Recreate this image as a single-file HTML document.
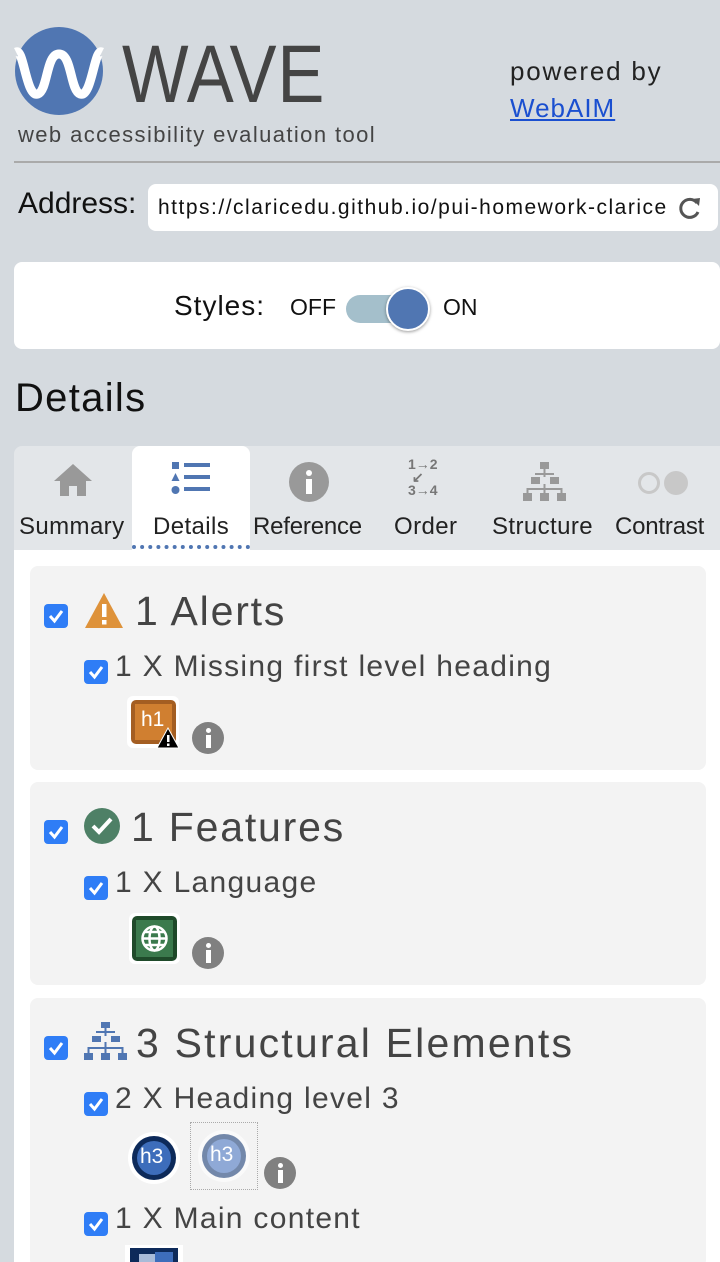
<!DOCTYPE html>
<html style="width:720px;height:1262px;overflow:hidden"><head><meta charset="utf-8"><style>
*{margin:0;padding:0;box-sizing:border-box}
body{width:720px;height:1262px;overflow:hidden;background:#d5dadf;font-family:"Liberation Sans",sans-serif;color:#444;position:relative}
.a{position:absolute;white-space:nowrap}
.cb{position:absolute;background:#2f7df6;border-radius:4px}
.cb svg{position:absolute;left:0;top:0}
.card{position:absolute;left:30px;width:676px;background:#f3f3f3;border-radius:8px}
.info{position:absolute;width:32px;height:32px;border-radius:50%;background:#808080}
.info:before{content:"";position:absolute;left:14px;top:6px;width:5px;height:5px;background:#fff;border-radius:50%}
.info:after{content:"";position:absolute;left:14px;top:13px;width:5px;height:13px;background:#fff}
.tab{position:absolute;top:527px;font-size:24px;color:#222;transform:translateY(-50%);letter-spacing:0.4px}
.h{font-size:41px;color:#444;letter-spacing:1.8px}
.s{font-size:30px;color:#444;letter-spacing:1.3px}
</style></head><body>
<svg class="a" style="left:14px;top:26px" width="90" height="90" viewBox="0 0 90 90">
<circle cx="45" cy="45" r="44" fill="#5076b2"/>
<path d="M2 26 C10 22 12 72 24 68 C34 64 32 28 45 28 C58 28 56 64 66 68 C78 72 80 22 88 26" fill="none" stroke="#fff" stroke-width="9"/>
</svg>
<div class="a" style="left:122px;top:28px;font-size:82px;color:#444;letter-spacing:1px;transform:scaleX(0.86);transform-origin:left">WAVE</div>
<div class="a" style="left:18px;top:122px;font-size:22px;color:#444;letter-spacing:1.4px">web accessibility evaluation tool</div>
<div class="a" style="left:510px;top:56px;font-size:26px;color:#222;letter-spacing:1.8px">powered by</div>
<div class="a" style="left:510px;top:93px;font-size:26px;color:#1a4fd0;text-decoration:underline;letter-spacing:1px">WebAIM</div>
<div class="a" style="left:14px;top:161px;width:706px;height:2px;background:#aaa"></div>
<div class="a" style="left:18px;top:187px;font-size:30px;color:#111">Address:</div>
<div class="a" style="left:148px;top:184px;width:570px;height:47px;background:#fff;border-radius:8px"></div>
<div class="a" style="left:158px;top:196px;font-size:21px;color:#111;letter-spacing:1.5px">https://claricedu.github.io/pui-homework-clarice</div>
<svg class="a" style="left:677px;top:195px" width="26" height="26" viewBox="0 0 26 26"><path d="M20 8 A9 9 0 1 0 21 17" fill="none" stroke="#555" stroke-width="3"/><path d="M15 4 L23 3 L22 11 Z" fill="#555"/></svg>
<div class="a" style="left:14px;top:262px;width:706px;height:87px;background:#fff;border-radius:8px"></div>
<div class="a" style="left:174px;top:290px;font-size:28px;color:#111;letter-spacing:1px">Styles:</div>
<div class="a" style="left:290px;top:294px;font-size:23px;color:#111">OFF</div>
<div class="a" style="left:346px;top:295px;width:70px;height:28px;background:#a4bfcb;border-radius:14px"></div>
<div class="a" style="left:386px;top:287px;width:44px;height:44px;background:#5076b2;border-radius:50%;border:2px solid #fff;box-shadow:0 1px 3px rgba(0,0,0,.4)"></div>
<div class="a" style="left:443px;top:294px;font-size:23px;color:#111">ON</div>
<div class="a" style="left:15px;top:376px;font-size:40px;color:#111;letter-spacing:1.3px">Details</div>
<div class="a" style="left:14px;top:446px;width:706px;height:104px;background:#e3e6e9;border-radius:8px 0 0 0"></div>
<div class="a" style="left:132px;top:446px;width:118px;height:104px;background:#fff;border-radius:8px 8px 0 0"></div>
<div class="a" style="left:132px;top:545px;width:118px;height:0;border-top:4px dotted #5076b2"></div>
<div class="a" style="left:14px;top:550px;width:706px;height:712px;background:#fff"></div>
<svg class="a" style="left:53px;top:462px" width="40" height="36" viewBox="0 0 40 36"><path d="M20 2 L39 19 L33 19 L33 34 L24 34 L24 24 L16 24 L16 34 L7 34 L7 19 L1 19 Z" fill="#999"/></svg>
<svg class="a" style="left:170px;top:460px" width="42" height="36" viewBox="0 0 42 36"><rect x="2" y="2" width="7" height="7" fill="#5076b2"/><path d="M5.5 13 L9.5 21 L1.5 21Z" fill="#5076b2"/><circle cx="5.5" cy="30" r="4" fill="#5076b2"/><rect x="14" y="3" width="26" height="4" fill="#5076b2"/><rect x="14" y="15" width="26" height="4" fill="#5076b2"/><rect x="14" y="27" width="26" height="4" fill="#5076b2"/></svg>
<div class="a" style="left:289px;top:462px;width:40px;height:40px;border-radius:50%;background:#999"></div>
<div class="a" style="left:306px;top:470px;width:6px;height:6px;background:#fff;border-radius:50%"></div>
<div class="a" style="left:306px;top:479px;width:6px;height:15px;background:#fff"></div>
<div class="a" style="left:408px;top:458px;font-size:14px;color:#777;font-weight:bold;line-height:13px">1→2<br>&nbsp;↙<br>3→4</div>
<svg class="a" style="left:523px;top:462px" width="44" height="40" viewBox="0 0 44 40"><g fill="#999"><rect x="17" y="0" width="9" height="7"/><rect x="8" y="15" width="9" height="7"/><rect x="27" y="15" width="9" height="7"/><rect x="0" y="31" width="9" height="8"/><rect x="17" y="31" width="9" height="8"/><rect x="34" y="31" width="9" height="8"/></g><path d="M21.5 7V15M12 12H31M4.5 31V27H38.5V31M21.5 22V31" stroke="#999" stroke-width="2" fill="none"/></svg>
<div class="a" style="left:638px;top:472px;width:22px;height:22px;border-radius:50%;border:3px solid #c8c8c8"></div>
<div class="a" style="left:664px;top:471px;width:24px;height:24px;border-radius:50%;background:#c8c8c8"></div>
<div class="tab" style="left:19px">Summary</div>
<div class="tab" style="left:153px">Details</div>
<div class="tab" style="left:253px;letter-spacing:-0.2px">Reference</div>
<div class="tab" style="left:394px">Order</div>
<div class="tab" style="left:492px">Structure</div>
<div class="tab" style="left:615px;letter-spacing:-0.2px">Contrast</div>
<div class="card" style="top:566px;height:204px"></div>
<div class="cb" style="left:44px;top:604px;width:24px;height:24px"><svg width="24" height="24"><path d="M6 12 L10.5 17 L18 7" stroke="#fff" stroke-width="3" fill="none"/></svg></div>
<svg class="a" style="left:84px;top:592px" width="40" height="36" viewBox="0 0 40 36"><path d="M20 1 L39 36 L1 36Z" fill="#de923a"/><rect x="18" y="12" width="4.5" height="13" fill="#fff"/><rect x="18" y="28" width="4.5" height="4.5" fill="#fff"/></svg>
<div class="a h" style="left:135px;top:588px">1 Alerts</div>
<div class="cb" style="left:84px;top:660px;width:24px;height:24px"><svg width="24" height="24"><path d="M6 12 L10.5 17 L18 7" stroke="#fff" stroke-width="3" fill="none"/></svg></div>
<div class="a s" style="left:115px;top:650px">1 X Missing first level heading</div>
<div class="a" style="left:127px;top:696px;width:52px;height:52px;background:#fff;border-radius:6px"></div>
<div class="a" style="left:131px;top:700px;width:45px;height:44px;background:#a45e22;border-radius:5px"></div>
<div class="a" style="left:135px;top:704px;width:37px;height:36px;background:#d07f30"></div>
<div class="a" style="left:141px;top:708px;font-size:21px;color:#fff">h1</div>
<svg class="a" style="left:156px;top:727px" width="24" height="22" viewBox="0 0 24 22"><path d="M12 1 L23 21 L1 21Z" fill="#000" stroke="#fff" stroke-width="1"/><rect x="11" y="8" width="2.5" height="7" fill="#fff"/><rect x="11" y="16.5" width="2.5" height="2.5" fill="#fff"/></svg>
<div class="info" style="left:192px;top:722px"></div>
<div class="card" style="top:782px;height:203px"></div>
<div class="cb" style="left:44px;top:820px;width:24px;height:24px"><svg width="24" height="24"><path d="M6 12 L10.5 17 L18 7" stroke="#fff" stroke-width="3" fill="none"/></svg></div>
<svg class="a" style="left:84px;top:808px" width="36" height="36" viewBox="0 0 36 36"><circle cx="18" cy="18" r="18" fill="#4e8066"/><path d="M9 18 L15 24 L27 11" stroke="#fff" stroke-width="4" fill="none"/></svg>
<div class="a h" style="left:131px;top:804px">1 Features</div>
<div class="cb" style="left:84px;top:876px;width:24px;height:24px"><svg width="24" height="24"><path d="M6 12 L10.5 17 L18 7" stroke="#fff" stroke-width="3" fill="none"/></svg></div>
<div class="a s" style="left:115px;top:866px">1 X Language</div>
<div class="a" style="left:129px;top:913px;width:51px;height:51px;background:#fff;border-radius:6px"></div>
<div class="a" style="left:132px;top:916px;width:45px;height:45px;background:#1f4a2a;border-radius:5px"></div>
<div class="a" style="left:136px;top:920px;width:37px;height:37px;background:#3b7a4d"></div>
<svg class="a" style="left:139px;top:923px" width="31" height="31" viewBox="0 0 31 31"><g fill="none" stroke="#fff" stroke-width="2.5"><circle cx="15.5" cy="15.5" r="12"/><ellipse cx="15.5" cy="15.5" rx="5" ry="12"/><path d="M3.5 15.5H27.5M5.5 9H25.5M5.5 22H25.5"/></g></svg>
<div class="info" style="left:192px;top:937px"></div>
<div class="card" style="top:998px;height:270px"></div>
<div class="cb" style="left:44px;top:1036px;width:24px;height:24px"><svg width="24" height="24"><path d="M6 12 L10.5 17 L18 7" stroke="#fff" stroke-width="3" fill="none"/></svg></div>
<svg class="a" style="left:84px;top:1022px" width="44" height="40" viewBox="0 0 44 40"><g fill="#5076b2"><rect x="17" y="0" width="9" height="6"/><rect x="8" y="14" width="9" height="6"/><rect x="27" y="14" width="9" height="6"/><rect x="0" y="31" width="9" height="7"/><rect x="17" y="31" width="9" height="7"/><rect x="34" y="31" width="9" height="7"/></g><path d="M21.5 6V14M12 10H31M4.5 31V26H38.5V31M21.5 20V31" stroke="#5076b2" stroke-width="2" fill="none"/></svg>
<div class="a h" style="left:136px;top:1020px;letter-spacing:2.2px">3 Structural Elements</div>
<div class="cb" style="left:84px;top:1092px;width:24px;height:24px"><svg width="24" height="24"><path d="M6 12 L10.5 17 L18 7" stroke="#fff" stroke-width="3" fill="none"/></svg></div>
<div class="a s" style="left:115px;top:1082px">2 X Heading level 3</div>
<div class="a" style="left:128px;top:1132px;width:52px;height:52px;background:#fff;border-radius:50%"></div>
<div class="a" style="left:132px;top:1136px;width:44px;height:44px;background:#0d2a5a;border-radius:50%"></div>
<div class="a" style="left:137px;top:1141px;width:34px;height:34px;background:#3d6dbb;border-radius:50%"></div>
<div class="a" style="left:140px;top:1145px;font-size:21px;color:#fff">h3</div>
<div class="a" style="left:190px;top:1122px;width:68px;height:68px;border:1px dotted #aaa"></div>
<div class="a" style="left:198px;top:1130px;width:52px;height:52px;background:#fafafa;border-radius:50%"></div>
<div class="a" style="left:202px;top:1134px;width:44px;height:44px;background:#7388aa;border-radius:50%"></div>
<div class="a" style="left:207px;top:1139px;width:34px;height:34px;background:#8fa9d6;border-radius:50%"></div>
<div class="a" style="left:210px;top:1143px;font-size:21px;color:#fff">h3</div>
<div class="info" style="left:264px;top:1157px"></div>
<div class="cb" style="left:84px;top:1212px;width:24px;height:24px"><svg width="24" height="24"><path d="M6 12 L10.5 17 L18 7" stroke="#fff" stroke-width="3" fill="none"/></svg></div>
<div class="a s" style="left:115px;top:1202px">1 X Main content</div>
<div class="a" style="left:125px;top:1245px;width:58px;height:17px;background:#fff"></div>
<div class="a" style="left:130px;top:1248px;width:48px;height:14px;background:#0d2a5a"></div>
<div class="a" style="left:139px;top:1254px;width:34px;height:8px;background:#a8bbd8"></div>
<div class="a" style="left:155px;top:1252px;width:18px;height:10px;background:#3d6dbb"></div>
</body></html>
